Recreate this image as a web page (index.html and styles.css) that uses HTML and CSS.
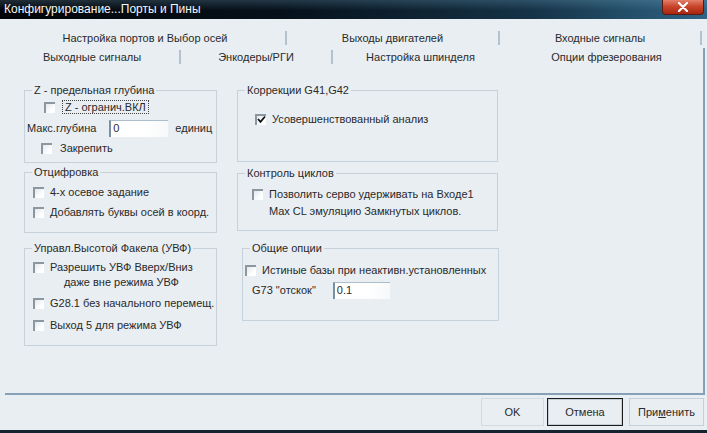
FILE: index.html
```html
<!DOCTYPE html>
<html lang="ru">
<head>
    <meta charset="UTF-8" />
    <title>Конфигурирование...Порты и Пины</title>
    <link rel="stylesheet" href="styles.css">
</head>
<body>
    <div class="window">
        <div class="titlebar">
            <span class="title">Конфигурирование...Порты и Пины</span>
            <span class="close">
                <svg width="12" height="10" viewBox="0 0 12 10"><path d="M2 1 L10 9 M10 1 L2 9" stroke="#fff" stroke-width="2.2" stroke-linecap="round"/></svg>
            </span>
        </div>

        <div class="tabs">
            <div class="tab-row back">
                <div class="tab w282">Настройка портов и Выбор осей</div>
                <div class="tab w213">Выходы двигателей</div>
                <div class="tab w202">Входные сигналы</div>
            </div>
            <div class="tab-row front">
                <div class="tab w176">Выходные сигналы</div>
                <div class="tab w152">Энкодеры/РГИ</div>
                <div class="tab w177 no-sep">Настройка шпинделя</div>
                <div class="tab active">Опции фрезерования</div>
            </div>
        </div>

        <div class="panel">
            <div class="col left">
                <div class="group g-depth">
                    <div class="group-title">Z - предельная глубина</div>
                    <div class="row r-zon">
                        <span class="cb"></span>
                        <span class="focus">Z - огранич.ВКЛ</span>
                    </div>
                    <div class="row r-max">
                        <span>Макс.глубина</span>
                        <span class="field f-depth">0</span>
                        <span class="unit">единиц</span>
                    </div>
                    <div class="row r-lock">
                        <span class="cb"></span>
                        <span>Закрепить</span>
                    </div>
                </div>

                <div class="group g-digit">
                    <div class="group-title">Отцифровка</div>
                    <div class="body pad-digit">
                        <div class="row"><span class="cb"></span><span>4-х осевое задание</span></div>
                        <div class="row"><span class="cb"></span><span>Добавлять буквы осей в коорд.</span></div>
                    </div>
                </div>

                <div class="group g-thc">
                    <div class="group-title">Управл.Высотой Факела (УВФ)</div>
                    <div class="body pad-thc">
                        <div class="row multi centered">
                            <span class="cb"></span>
                            <span>Разрешить УВФ Вверх/Вниз<br>даже вне режима УВФ</span>
                        </div>
                        <div class="row tall first"><span class="cb"></span><span>G28.1 без начального перемещ.</span></div>
                        <div class="row tall"><span class="cb"></span><span>Выход 5 для режима УВФ</span></div>
                    </div>
                </div>
            </div>

            <div class="col right">
                <div class="group g-comp">
                    <div class="group-title">Коррекции G41,G42</div>
                    <div class="body pad-comp">
                        <div class="row">
                            <span class="cb checked">
                                <svg width="9" height="9" viewBox="0 0 9 9"><path d="M1 4 L3.5 6.8 L8 1.5" fill="none" stroke="#111" stroke-width="1.8"/></svg>
                            </span>
                            <span>Усовершенствованный анализ</span>
                        </div>
                    </div>
                </div>

                <div class="group g-cycle">
                    <div class="group-title">Контроль циклов</div>
                    <div class="body pad-cycle">
                        <div class="row multi">
                            <span class="cb"></span>
                            <span>Позволить серво удерживать на Входе1<br>Max CL эмуляцию Замкнутых циклов.</span>
                        </div>
                    </div>
                </div>

                <div class="group g-common">
                    <div class="group-title">Общие опции</div>
                    <div class="body pad-common">
                        <div class="row"><span class="cb"></span><span>Истиные базы при неактивн.установленных</span></div>
                        <div class="row r-g73">
                            <span>G73 "отскок"</span>
                            <span class="field f-g73">0.1</span>
                        </div>
                    </div>
                </div>
            </div>
        </div>

        <div class="buttons">
            <button class="btn ok">OK</button>
            <button class="btn cancel">Отмена</button>
            <button class="btn apply">При<u>м</u>енить</button>
        </div>
    </div>
</body>
</html>
```

FILE: styles.css
```css
:root {
    --bg: #e9eef3;
    --text: #2a2a2a;
    --group-line: #c6d1da;
    --frame-line: #86a1b7;
}

body {
    margin: 0;
    padding: 0;
    font-family: 'Liberation Sans', Arial, sans-serif;
    font-size: 11px;
    color: var(--text);
    background: var(--bg);
}

.window {
    width: 707px;
    height: 433px;
    display: flex;
    flex-direction: column;
    background: var(--bg);
    overflow: hidden;
}

/* title bar */
.titlebar {
    height: 19px;
    flex: none;
    display: flex;
    justify-content: space-between;
    align-items: flex-start;
    background:
        linear-gradient(to bottom, rgba(120,170,200,0.25), rgba(0,0,0,0) 55%),
        linear-gradient(to right, #020407 0%, #06111b 40%, #153246 75%, #2f6484 100%);
}

.title {
    color: #f4f6f8;
    font-size: 12px;
    line-height: 19px;
    padding-left: 4px;
}

.close {
    width: 42px;
    height: 15px;
    margin-right: 3px;
    display: flex;
    align-items: center;
    justify-content: center;
    box-sizing: border-box;
    border: 1px solid #5a1a10;
    border-top: none;
    border-radius: 0 0 4px 4px;
    background: linear-gradient(to bottom, #e2806a 0%, #c9462d 45%, #a8260f 100%);
}

/* tabs */
.tabs {
    flex: none;
    padding-top: 9px;
    padding-left: 5px;
}

.tab-row {
    display: flex;
}

.tab-row.back {
    height: 20px;
}

.tab-row.front {
    height: 18px;
}

.tab {
    box-sizing: border-box;
    height: 14px;
    line-height: 14px;
    margin-top: 3px;
    text-align: center;
    border-right: 2px solid #b3c2ce;
    white-space: nowrap;
}

.front .tab {
    margin-top: 2px;
}

.w282 { width: 282px; }
.w213 { width: 213px; }
.w202 { width: 202px; }
.w176 { width: 176px; }
.w152 { width: 152px; }
.w177 { width: 177px; }

.tab.no-sep {
    border-right-color: transparent;
}

.front .tab.active {
    width: 195px;
    height: 18px;
    margin-top: 0;
    line-height: 18px;
    border-right-color: var(--frame-line);
}

/* panel */
.panel {
    flex: none;
    box-sizing: border-box;
    margin-left: 5px;
    width: 700px;
    height: 329px;
    padding: 24px 0 0 19px;
    border-right: 2px solid var(--frame-line);
    border-bottom: 2px solid var(--frame-line);
    display: flex;
    align-items: flex-start;
    gap: 20px;
}

.col {
    display: flex;
    flex-direction: column;
}

.col.left { width: 193px; }
.col.right { width: 261px; }

.group {
    box-sizing: border-box;
    border: 1px solid var(--group-line);
    display: flex;
    flex-direction: column;
}

.group-title {
    align-self: flex-start;
    margin: -7px 0 0 7px;
    padding: 0 2px;
    height: 13px;
    line-height: 13px;
    background: var(--bg);
}

.row {
    display: flex;
    align-items: center;
    height: 20px;
    gap: 6px;
    white-space: nowrap;
}

.row.tall { height: 22px; }

.row.multi {
    height: auto;
    align-items: flex-start;
    line-height: 15px;
}

.row.multi .cb { margin-top: 2px; }

.row.centered span:last-child { text-align: center; }

.cb {
    flex: none;
    width: 11px;
    height: 11px;
    box-sizing: border-box;
    border-left: 2px solid #8d979f;
    border-top: 2px solid #8d979f;
    background: linear-gradient(135deg, #e4e9ed, #ffffff 70%);
    display: flex;
    align-items: center;
    justify-content: center;
}

.cb.checked svg { margin-bottom: 1px; }

.field {
    box-sizing: border-box;
    height: 17px;
    line-height: 15px;
    padding-left: 2px;
    background: linear-gradient(to right, #fff 60%, #f6f8fa);
    border-left: 2px solid #7890a4;
    border-top: 1px solid #aebdca;
}

/* Z depth */
.g-depth { height: 73px; }

.r-zon {
    height: 20px;
    padding-left: 19px;
    gap: 7px;
}

.focus {
    border: 1px dotted #444;
    padding: 0 2px;
    line-height: 12px;
}

.r-max {
    height: 22px;
    padding-left: 2px;
    gap: 0;
}

.f-depth {
    width: 59px;
    margin-left: 13px;
}

.unit { margin-left: 7px; }

.r-lock {
    height: 18px;
    padding-left: 16px;
    gap: 8px;
}

/* digitize */
.g-digit {
    height: 61px;
    margin-top: 9px;
}

.pad-digit { padding: 3px 0 0 8px; }

/* THC */
.g-thc {
    height: 98px;
    margin-top: 15px;
}

.pad-thc { padding: 5px 0 0 8px; }

.pad-thc .row.first { margin-top: 2px; }

/* right column */
.g-comp {
    width: 261px;
    height: 72px;
}

.pad-comp { padding: 12px 0 0 17px; }

.g-cycle {
    width: 261px;
    height: 58px;
    margin-top: 11px;
}

.pad-cycle { padding: 6px 0 0 14px; }

.pad-cycle .row.multi { line-height: 17px; }

.pad-cycle .row.multi .cb { margin-top: 3px; }

.g-common {
    width: 257px;
    height: 73px;
    margin: 17px 0 0 5px;
}

.pad-common { padding: 5px 0 0 2px; }

.r-g73 {
    padding-left: 7px;
    gap: 0;
}

.f-g73 {
    width: 57px;
    margin-left: 17px;
}

/* bottom buttons */
.buttons {
    flex: 1;
    display: flex;
    justify-content: flex-end;
    align-items: flex-start;
    padding: 3px 3px 0 0;
    border-bottom: 3px solid #15232e;
}

.btn {
    font-family: 'Liberation Sans', Arial, sans-serif;
    font-size: 11px;
    color: var(--text);
    height: 28px;
    padding: 0;
    background: var(--bg);
    border: 1px solid #d2dbe2;
}

.btn.ok { width: 63px; }

.btn.cancel {
    width: 76px;
    margin-left: 3px;
    border: 1px solid #1c1c1c;
    box-shadow: inset 0 0 0 1px #c3ced8;
}

.btn.apply {
    width: 75px;
    margin-left: 6px;
    border-color: #c4d0da;
}
```
